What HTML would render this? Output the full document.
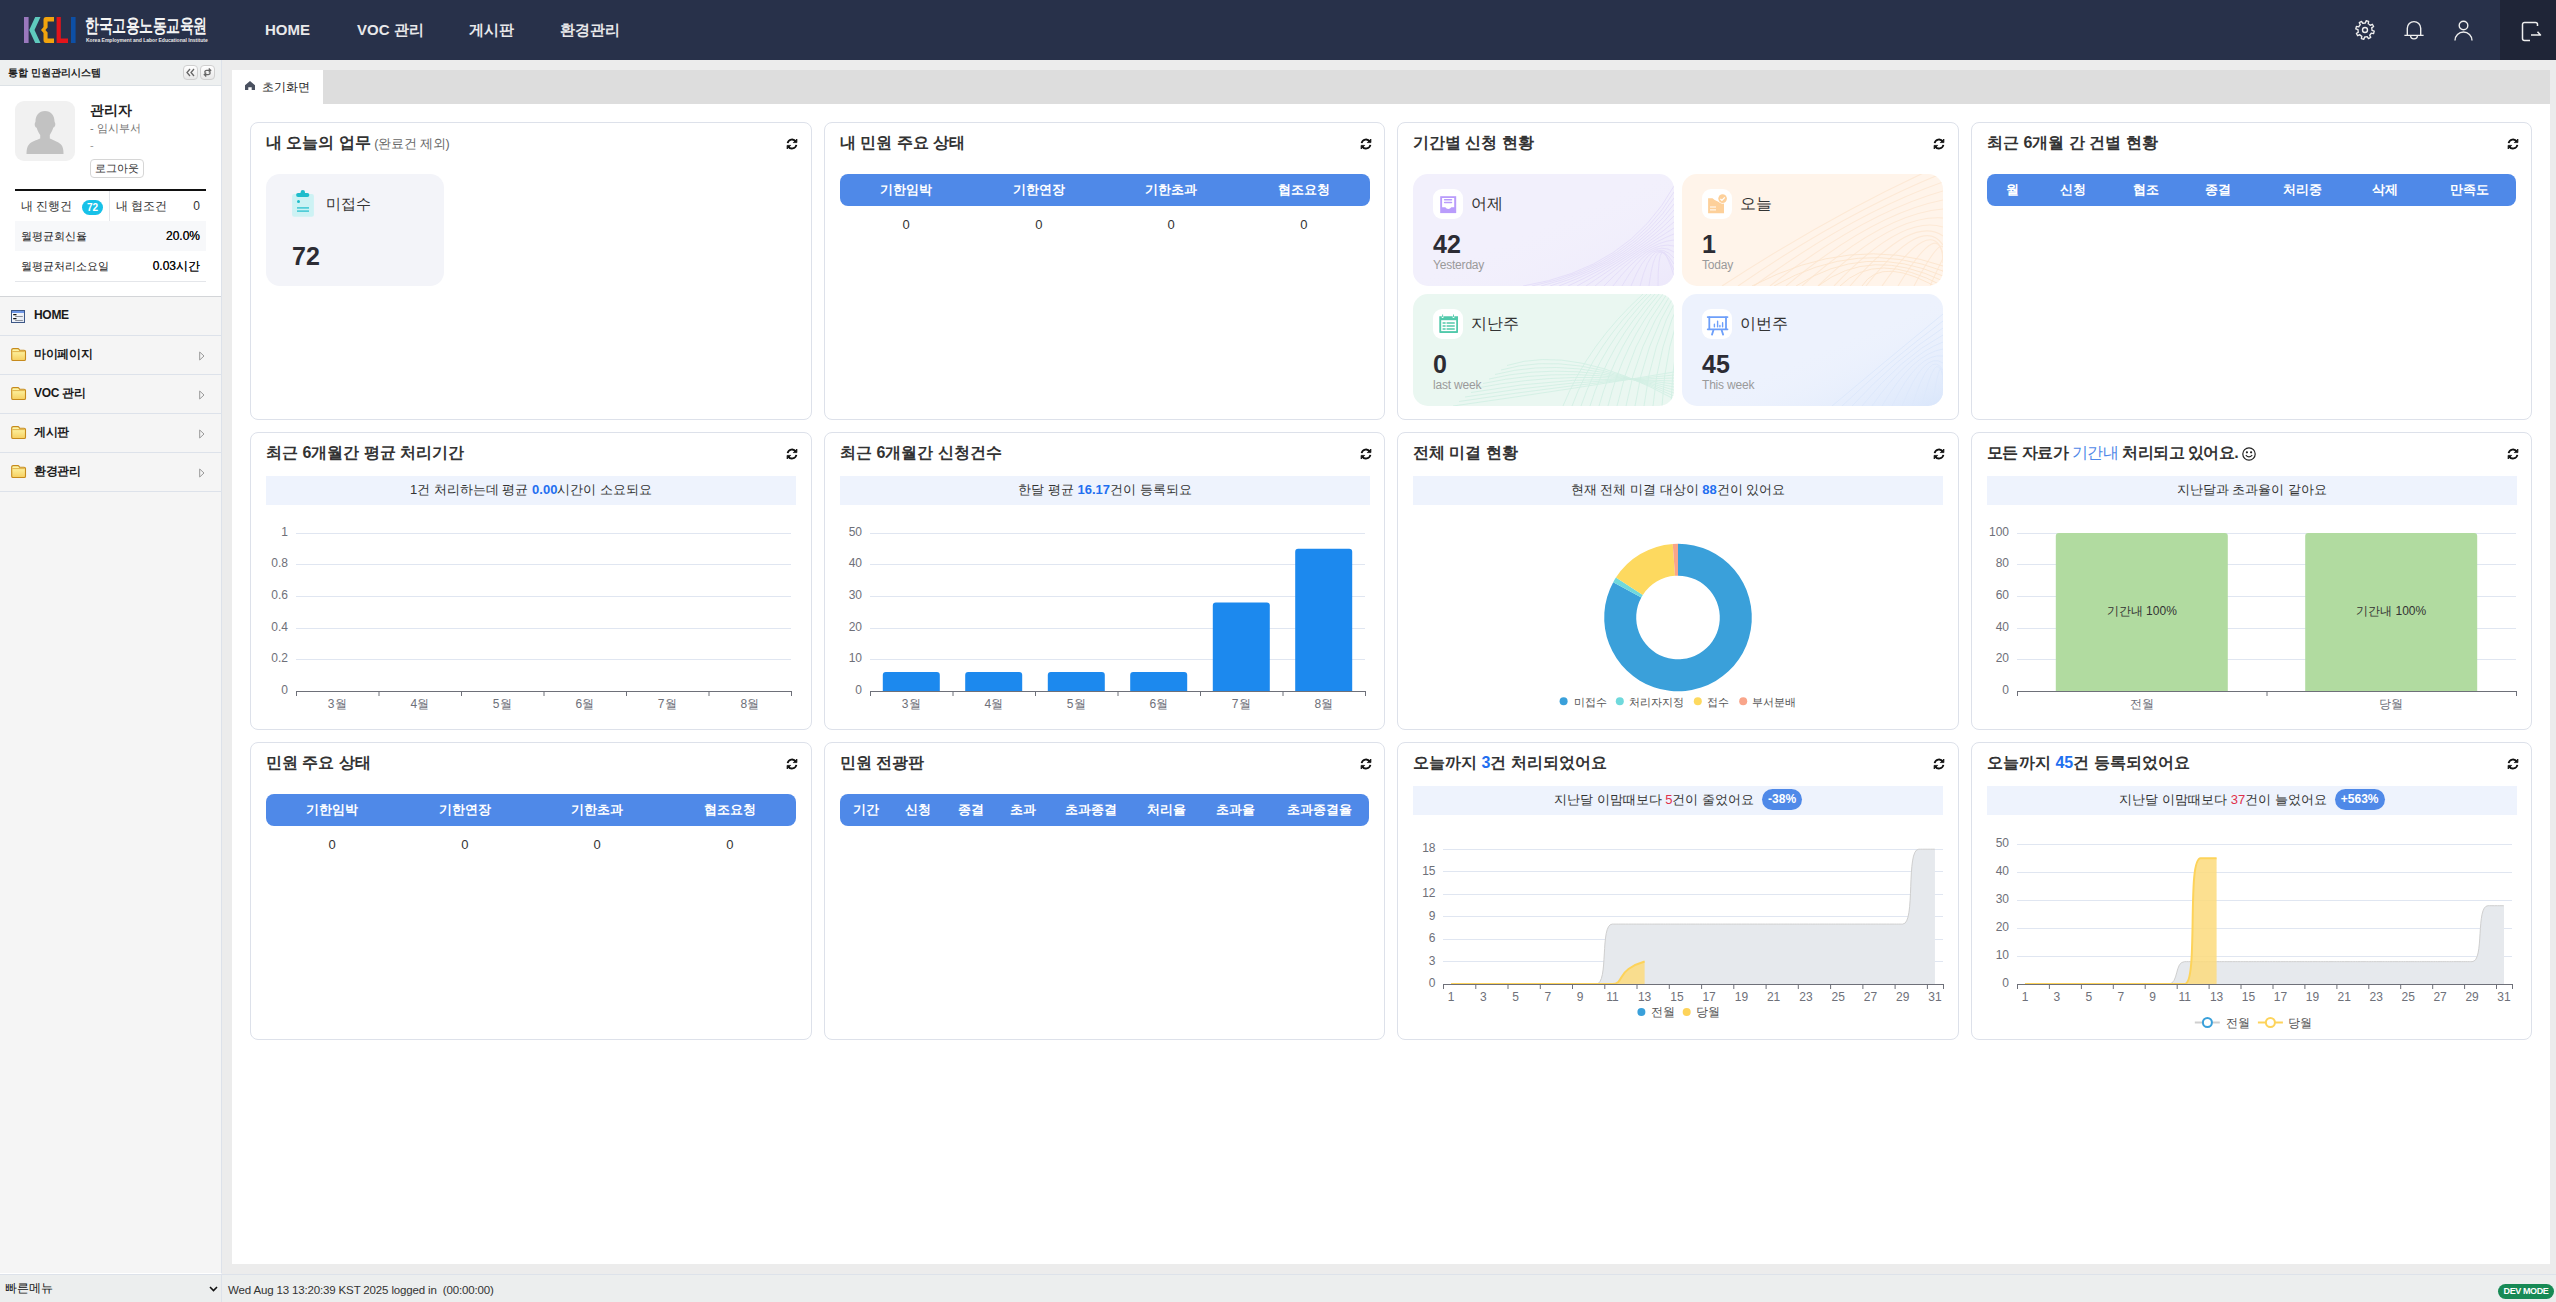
<!DOCTYPE html>
<html lang="ko"><head><meta charset="utf-8">
<style>
*{box-sizing:border-box;margin:0;padding:0}
html,body{width:2556px;height:1302px;overflow:hidden;background:#ececec;font-family:"Liberation Sans",sans-serif;color:#333}
.abs{position:absolute}
#hdr{position:absolute;left:0;top:0;width:2556px;height:60px;background:#28314a}
#logout{position:absolute;left:2500px;top:0;width:56px;height:60px;background:#1f2537}
.nav{position:absolute;top:19px;font-size:15px;font-weight:bold;color:#e8e8ea;white-space:nowrap;line-height:22px}
#side{position:absolute;left:0;top:60px;width:222px;height:1214px;background:#f5f5f5;border-right:1px solid #dde2ea;border-bottom:1px solid #fff}
#side .ttl{position:absolute;left:0;top:0;width:221px;height:26px;background:#eef0f0;border-bottom:1px solid #dde2e6}
#prof{position:absolute;left:0;top:26px;width:221px;height:211px;background:#fff;border-bottom:1px solid #d3d5d8}
.menu{position:absolute;left:0;width:221px;height:39px;border-bottom:1px solid #dde2ea;font-size:12.5px;color:#222}
#main{position:absolute;left:232px;top:70px;width:2318px;height:1194px;background:#fff}
#tabbar{position:absolute;left:323px;top:70px;width:2227px;height:34px;background:#dddddd}
#foot{position:absolute;left:0;top:1274px;width:2556px;height:28px;background:#eceeee;border-top:1px solid #dde2ea}
.card{position:absolute;border:1px solid #dde1ea;border-radius:8px;background:#fff;height:298px}
.ct{position:absolute;left:15px;top:10px;font-size:16px;font-weight:bold;color:#333;white-space:nowrap;line-height:20px}
.rf{position:absolute;top:15px;width:12px;height:12px}
.bar{position:absolute;left:15px;top:51px;height:32px;background:#4f89e8;border-radius:8px;color:#fff;font-weight:bold;font-size:13px}
.bar span,.vals span{position:absolute;top:8px;transform:translateX(-50%);white-space:nowrap;line-height:16px}
.vals{position:absolute;left:15px;top:93px;height:20px;font-size:13px;color:#333}
.vals span{top:1px}
.ban{position:absolute;left:15px;top:53px;height:29px;background:#eef3fd;font-size:13px;color:#333;text-align:center;line-height:28px;white-space:nowrap}
.ban b{color:#1f6ff0;font-weight:bold}
.ban i{color:#e0314b;font-style:normal}
.badge{display:inline-block;background:#4f89e8;color:#fff;font-weight:bold;border-radius:11px;padding:0 6px;line-height:21px;height:21px;font-size:12px;margin-left:8px;vertical-align:1px}
svg{position:absolute;overflow:visible}
.ax{font-size:12px;fill:#6e7079}
</style></head><body>

<!-- HEADER -->
<div id="hdr"></div>
<div id="logout"></div>
<svg style="left:24px;top:17px" width="52" height="27" viewBox="0 0 52 27">
  <rect x="0" y="0" width="4.6" height="26" fill="#9a78bd"/>
  <path d="M16.5 0 L11.2 0 L5.2 13 L11.2 26 L16.5 26 L10.5 13 Z" fill="#5fc9bd"/>
  <path d="M30 0 L22 0 Q19.5 0 19.5 3 L19.5 10 L17 13 L19.5 16 L19.5 23 Q19.5 26 22 26 L30 26 L30 21.5 L23.6 21.5 L23.6 15.5 L21.4 13 L23.6 10.5 L23.6 4.5 L30 4.5 Z" fill="#f1a30d"/>
  <path d="M32.6 0 L36.8 0 L36.8 21.6 L44 21.6 L44 26 L32.6 26 Z" fill="#e3141b"/>
  <rect x="47" y="0" width="4.6" height="26" fill="#0d4fa5"/>
</svg>
<div class="abs" style="left:85px;top:14px;font-size:19px;font-weight:bold;color:#f4f4f4;white-space:nowrap;line-height:24px;letter-spacing:-0.5px;transform:scaleX(0.731);transform-origin:0 0">한국고용노동교육원</div>
<div class="abs" style="left:86px;top:37px;font-size:5px;font-weight:bold;color:#e8e8e8;white-space:nowrap;line-height:6px">Korea Employment and Labor Educational Institute</div>
<div class="nav" style="left:265px">HOME</div>
<div class="nav" style="left:357px">VOC 관리</div>
<div class="nav" style="left:469px">게시판</div>
<div class="nav" style="left:560px">환경관리</div>
<svg style="left:2355px;top:20px" width="20" height="20" viewBox="0 0 20 20" fill="none" stroke="#eeeeee" stroke-width="1.35" stroke-linejoin="round"><path d="M10.37 3.01 L11.13 0.77 L13.63 1.44 L13.18 3.76 A7.0 7.0 0 0 1 15.20 5.32 L17.33 4.27 L18.62 6.52 L16.66 7.84 A7.0 7.0 0 0 1 16.99 10.37 L19.23 11.13 L18.56 13.63 L16.24 13.18 A7.0 7.0 0 0 1 14.68 15.20 L15.73 17.33 L13.48 18.62 L12.16 16.66 A7.0 7.0 0 0 1 9.63 16.99 L8.87 19.23 L6.37 18.56 L6.82 16.24 A7.0 7.0 0 0 1 4.80 14.68 L2.67 15.73 L1.38 13.48 L3.34 12.16 A7.0 7.0 0 0 1 3.01 9.63 L0.77 8.87 L1.44 6.37 L3.76 6.82 A7.0 7.0 0 0 1 5.32 4.80 L4.27 2.67 L6.52 1.38 L7.84 3.34 A7.0 7.0 0 0 1 10.37 3.01Z"/><circle cx="10" cy="10" r="2.5"/></svg>
<svg style="left:2404px;top:20px" width="20" height="21" viewBox="0 0 20 21" fill="none" stroke="#eeeeee" stroke-width="1.4"><path d="M.4 15.4h19.2M3.3 15.4V8.3a6.7 6.7 0 0 1 13.4 0v7.1"/><path d="M6.6 15.5a3.4 3.4 0 0 0 6.8 0"/></svg>
<svg style="left:2454px;top:20px" width="19" height="21" viewBox="0 0 19 21" fill="none" stroke="#eeeeee" stroke-width="1.4">
  <circle cx="9.5" cy="5.5" r="4.3"/>
  <path d="M1 20.5a8.5 8.5 0 0 1 17 0"/>
</svg>
<svg style="left:2521px;top:21px" width="21" height="21" viewBox="0 0 21 21" fill="none" stroke="#eeeeee" stroke-width="1.5" stroke-linejoin="round">
  <path d="M9 19.5H3.5a2 2 0 0 1-2-2V3.5a2 2 0 0 1 2-2h11a2 2 0 0 1 2 2v1.5"/>
  <path d="M10 14h9.5l-3-3.2"/>
</svg>

<!-- SIDEBAR -->
<div id="side">
  <div class="ttl"></div>
  <div class="abs" style="left:8px;top:6px;font-size:10px;font-weight:bold;color:#222;white-space:nowrap;line-height:14px">통합 민원관리시스템</div>
  <div class="abs" style="left:183px;top:5px;width:15px;height:15px;border:1px solid #cfcfcf;border-radius:4px;background:linear-gradient(#fff,#e8e8e8)"></div>
  <svg style="left:185px;top:7px" width="11" height="11" viewBox="0 0 11 11" fill="none" stroke="#666" stroke-width="1.3"><path d="M5 2L2 5.5L5 9M9 2L6 5.5L9 9"/></svg>
  <div class="abs" style="left:200px;top:5px;width:15px;height:15px;border:1px solid #cfcfcf;border-radius:4px;background:linear-gradient(#fff,#e8e8e8)"></div>
  <svg style="left:202px;top:7px" width="11" height="11" viewBox="0 0 11 11" fill="none" stroke="#666" stroke-width="1.3"><path d="M2.8 5.8V5.2Q2.8 3.4 4.6 3.4H7.6"/><path d="M7 1.2l2.3 2.2L7 5.6z" fill="#666" stroke-width=".6"/><path d="M8.2 5.2v.6Q8.2 7.6 6.4 7.6H3.4"/><path d="M4 5.4L1.7 7.6 4 9.8z" fill="#666" stroke-width=".6"/></svg>
  <div id="prof">
    <div class="abs" style="left:15px;top:15px;width:60px;height:60px;background:#f1f1f1;border-radius:9px"></div>
    <svg style="left:25px;top:24px" width="40" height="44" viewBox="0 0 40 44"><path fill="#c2c2c2" d="M20 1c-6 0-9.5 4.5-9.5 10.5 0 1-.8 1-.8 3 0 2 1 3 2 3.3.8 3 2.5 6 3.5 7.3v3.5C12 30 6 32 4 34.5 2 36.5 1.5 40 1.5 44h37c0-4-.5-7.5-2.5-9.5-2-2.5-8-4.5-11.2-6.1v-3.5c1-1.3 2.7-4.3 3.5-7.3 1-.3 2-1.3 2-3.3 0-2-.8-2-.8-3C29.5 5.5 26 1 20 1z"/></svg>
    <div class="abs" style="left:90px;top:15px;font-size:14px;font-weight:bold;color:#222;white-space:nowrap;line-height:18px">관리자</div>
    <div class="abs" style="left:90px;top:35px;font-size:11px;color:#777;white-space:nowrap;line-height:14px">- 임시부서</div>
    <div class="abs" style="left:90px;top:52px;font-size:11px;color:#999;white-space:nowrap;line-height:14px">-</div>
    <div class="abs" style="left:90px;top:73px;width:54px;height:19px;border:1px solid #d6d6d6;border-radius:4px;font-size:11px;color:#333;text-align:center;line-height:17px;background:#fff">로그아웃</div>
    <div class="abs" style="left:15px;top:103px;width:191px;height:2px;background:#111"></div>
    <div class="abs" style="left:15px;top:105px;width:191px;height:30px;background:#fff"></div>
    <div class="abs" style="left:109px;top:105px;width:1px;height:30px;background:#e4e6ea"></div>
    <div class="abs" style="left:21px;top:113px;font-size:11.5px;color:#333;white-space:nowrap;line-height:15px">내 진행건</div>
    <div class="abs" style="left:82px;top:114px;width:21px;height:15px;border-radius:8px;background:#17c1e8;color:#fff;font-size:10px;font-weight:bold;text-align:center;line-height:15px">72</div>
    <div class="abs" style="left:116px;top:113px;font-size:11.5px;color:#333;white-space:nowrap;line-height:15px">내 협조건</div>
    <div class="abs" style="left:190px;top:113px;width:10px;font-size:12px;color:#333;text-align:right;line-height:15px">0</div>
    <div class="abs" style="left:15px;top:135px;width:191px;height:30px;background:#f7f8fa"></div>
    <div class="abs" style="left:21px;top:143px;font-size:11px;color:#222;white-space:nowrap;line-height:15px">월평균회신율</div>
    <div class="abs" style="left:120px;top:143px;width:80px;font-size:12px;color:#111;text-align:right;line-height:15px;text-shadow:0 0 .4px #111">20.0%</div>
    <div class="abs" style="left:21px;top:173px;font-size:11px;color:#222;white-space:nowrap;line-height:15px">월평균처리소요일</div>
    <div class="abs" style="left:120px;top:173px;width:80px;font-size:12px;color:#111;text-align:right;line-height:15px;text-shadow:0 0 .4px #111">0.03시간</div>
    <div class="abs" style="left:15px;top:195px;width:191px;height:1px;background:#e4e6ea"></div>
  </div>
  <div class="menu" style="top:237px">
    <svg style="left:11px;top:13px" width="14" height="13" viewBox="0 0 14 13"><defs><linearGradient id="hg" x1="0" y1="0" x2="1" y2="1"><stop offset="0" stop-color="#fff"/><stop offset="1" stop-color="#dfe6f2"/></linearGradient></defs><rect x=".5" y=".5" width="13" height="12" fill="url(#hg)" stroke="#3d5786"/><rect x="1" y="1" width="12" height="2" fill="#6f97e6"/><path d="M2.2 4.6h3.3M2.2 8.6h3.3" stroke="#111" stroke-width="1.1"/><path d="M4.2 6.5h7.6M4.2 10.5h7.6" stroke="#8a8f99" stroke-width="1"/></svg>
    <div class="abs" style="left:34px;top:10px;font-size:12px;font-weight:bold;color:#1a1a1a;line-height:16px;letter-spacing:-0.3px">HOME</div>
  </div>
  <div class="menu" style="top:276px">
    <svg style="left:11px;top:12px" width="15" height="13" viewBox="0 0 15 13"><defs><linearGradient id="fg" x1="0" y1="0" x2="0" y2="1"><stop offset="0" stop-color="#fffbb0"/><stop offset="1" stop-color="#f6cf60"/></linearGradient></defs><path d="M.7 2.2Q.7 .6 2.2 .6h4.6q1 0 1.4 1l.3.6h4.6q1.4 0 1.4 1.4v7.6q0 1.3-1.3 1.3H2q-1.3 0-1.3-1.3z" fill="url(#fg)" stroke="#c68a1c" stroke-width="1.1"/><path d="M1.4 3.6h12.4" stroke="#d9a233" stroke-width=".8"/></svg>
    <div class="abs" style="left:34px;top:10px;font-size:12px;font-weight:bold;color:#1a1a1a;line-height:16px;letter-spacing:-0.3px">마이페이지</div>
    <svg style="left:199px;top:15px" width="6" height="10" viewBox="0 0 6 10"><path d="M.7 1L5 5L.7 9z" fill="none" stroke="#999" stroke-width="1"/></svg>
  </div>
  <div class="menu" style="top:315px">
    <svg style="left:11px;top:12px" width="15" height="13" viewBox="0 0 15 13"><defs><linearGradient id="fg" x1="0" y1="0" x2="0" y2="1"><stop offset="0" stop-color="#fffbb0"/><stop offset="1" stop-color="#f6cf60"/></linearGradient></defs><path d="M.7 2.2Q.7 .6 2.2 .6h4.6q1 0 1.4 1l.3.6h4.6q1.4 0 1.4 1.4v7.6q0 1.3-1.3 1.3H2q-1.3 0-1.3-1.3z" fill="url(#fg)" stroke="#c68a1c" stroke-width="1.1"/><path d="M1.4 3.6h12.4" stroke="#d9a233" stroke-width=".8"/></svg>
    <div class="abs" style="left:34px;top:10px;font-size:12px;font-weight:bold;color:#1a1a1a;line-height:16px;letter-spacing:-0.3px">VOC 관리</div>
    <svg style="left:199px;top:15px" width="6" height="10" viewBox="0 0 6 10"><path d="M.7 1L5 5L.7 9z" fill="none" stroke="#999" stroke-width="1"/></svg>
  </div>
  <div class="menu" style="top:354px">
    <svg style="left:11px;top:12px" width="15" height="13" viewBox="0 0 15 13"><defs><linearGradient id="fg" x1="0" y1="0" x2="0" y2="1"><stop offset="0" stop-color="#fffbb0"/><stop offset="1" stop-color="#f6cf60"/></linearGradient></defs><path d="M.7 2.2Q.7 .6 2.2 .6h4.6q1 0 1.4 1l.3.6h4.6q1.4 0 1.4 1.4v7.6q0 1.3-1.3 1.3H2q-1.3 0-1.3-1.3z" fill="url(#fg)" stroke="#c68a1c" stroke-width="1.1"/><path d="M1.4 3.6h12.4" stroke="#d9a233" stroke-width=".8"/></svg>
    <div class="abs" style="left:34px;top:10px;font-size:12px;font-weight:bold;color:#1a1a1a;line-height:16px;letter-spacing:-0.3px">게시판</div>
    <svg style="left:199px;top:15px" width="6" height="10" viewBox="0 0 6 10"><path d="M.7 1L5 5L.7 9z" fill="none" stroke="#999" stroke-width="1"/></svg>
  </div>
  <div class="menu" style="top:393px">
    <svg style="left:11px;top:12px" width="15" height="13" viewBox="0 0 15 13"><defs><linearGradient id="fg" x1="0" y1="0" x2="0" y2="1"><stop offset="0" stop-color="#fffbb0"/><stop offset="1" stop-color="#f6cf60"/></linearGradient></defs><path d="M.7 2.2Q.7 .6 2.2 .6h4.6q1 0 1.4 1l.3.6h4.6q1.4 0 1.4 1.4v7.6q0 1.3-1.3 1.3H2q-1.3 0-1.3-1.3z" fill="url(#fg)" stroke="#c68a1c" stroke-width="1.1"/><path d="M1.4 3.6h12.4" stroke="#d9a233" stroke-width=".8"/></svg>
    <div class="abs" style="left:34px;top:10px;font-size:12px;font-weight:bold;color:#1a1a1a;line-height:16px;letter-spacing:-0.3px">환경관리</div>
    <svg style="left:199px;top:15px" width="6" height="10" viewBox="0 0 6 10"><path d="M.7 1L5 5L.7 9z" fill="none" stroke="#999" stroke-width="1"/></svg>
  </div>
</div>

<!-- MAIN -->
<div id="main"></div>
<div id="tabbar"></div>
<svg style="left:245px;top:81px" width="10" height="9" viewBox="0 0 10 9"><path d="M5 0L0 4.3V9h3.3V6.2h3.4V9H10V4.3z" fill="#4a5160"/></svg>
<div class="abs" style="left:262px;top:78.5px;font-size:11.5px;color:#222;white-space:nowrap;line-height:16px">초기화면</div>
<!--CARDS-->
<div class="card" style="left:250px;top:122px;width:562px"><div class="ct">내 오늘의 업무 <span style="font-size:12.5px;font-weight:normal;color:#666;margin-left:-1px;letter-spacing:-0.2px">(완료건 제외)</span></div><div class="abs" style="left:15px;top:51px;width:178px;height:112px;background:#f3f4f9;border-radius:14px"></div><svg style="left:41px;top:67px" width="23" height="27" viewBox="0 0 23 27"><rect x="0.1" y="3.9" width="21.8" height="22.9" rx="2" fill="#cdf2f4"/><circle cx="10.8" cy="2.3" r="2.2" fill="#1fbccb"/><rect x="4.1" y="3.1" width="13.2" height="3.9" rx="1.9" fill="#1fbccb"/><circle cx="6.5" cy="11.5" r="1.5" fill="#1fbccb"/><path d="M5 17.9h12M5 21.1h12" stroke="#52cdd8" stroke-width="1.8"/></svg><div class="abs" style="left:75px;top:71px;font-size:15px;color:#333;white-space:nowrap;line-height:20px">미접수</div><div class="abs" style="left:41px;top:118px;font-size:25px;font-weight:bold;color:#2c2c34;line-height:30px">72</div><svg class="rf" style="left:535px" width="12" height="12" viewBox="0 0 12 12" fill="none" stroke="#111" stroke-width="1.8"><path d="M1.6 5.2A4.5 4.5 0 0 1 9.8 3.6"/><path d="M10.4 6.8A4.5 4.5 0 0 1 2.2 8.4"/><path d="M10.9 1v3.6H7.3z" fill="#111" stroke-width=".8"/><path d="M1.1 11V7.4h3.6z" fill="#111" stroke-width=".8"/></svg></div>
<div class="card" style="left:824px;top:122px;width:561px"><div class="ct">내 민원 주요 상태</div><div class="bar" style="width:530px"><span style="left:66.2px">기한임박</span><span style="left:198.8px">기한연장</span><span style="left:331.2px">기한초과</span><span style="left:463.8px">협조요청</span></div><div class="vals" style="width:530px"><span style="left:66.2px">0</span><span style="left:198.8px">0</span><span style="left:331.2px">0</span><span style="left:463.8px">0</span></div><svg class="rf" style="left:535px" width="12" height="12" viewBox="0 0 12 12" fill="none" stroke="#111" stroke-width="1.8"><path d="M1.6 5.2A4.5 4.5 0 0 1 9.8 3.6"/><path d="M10.4 6.8A4.5 4.5 0 0 1 2.2 8.4"/><path d="M10.9 1v3.6H7.3z" fill="#111" stroke-width=".8"/><path d="M1.1 11V7.4h3.6z" fill="#111" stroke-width=".8"/></svg></div>
<div class="card" style="left:1397px;top:122px;width:562px"><div class="ct">기간별 신청 현황</div><div class="abs" style="left:15px;top:51px;width:261px;height:112px;background:#f2f0fc;border-radius:15px;overflow:hidden"><svg style="left:0;top:0" width="261" height="112"><defs><linearGradient id="gp" x1="0" y1="0" x2="1" y2="1"><stop offset="0.45" stop-color="#f2f0fc" stop-opacity="0"/><stop offset="1" stop-color="#e9e3fa"/></linearGradient></defs><rect width="261" height="112" fill="url(#gp)" opacity=".6"/><path d="M110 112 Q215 95 261 12" fill="none" stroke="#e3dcf8" stroke-width="0.9"/><path d="M119 112 Q217 92 261 18" fill="none" stroke="#e3dcf8" stroke-width="0.9"/><path d="M128 112 Q219 89 261 24" fill="none" stroke="#e3dcf8" stroke-width="0.9"/><path d="M137 112 Q221 86 261 30" fill="none" stroke="#e3dcf8" stroke-width="0.9"/><path d="M146 112 Q223 83 261 36" fill="none" stroke="#e3dcf8" stroke-width="0.9"/><path d="M155 112 Q225 80 261 42" fill="none" stroke="#e3dcf8" stroke-width="0.9"/><path d="M164 112 Q227 77 261 48" fill="none" stroke="#e3dcf8" stroke-width="0.9"/><path d="M173 112 Q229 74 261 54" fill="none" stroke="#e3dcf8" stroke-width="0.9"/><path d="M182 112 Q231 71 261 60" fill="none" stroke="#e3dcf8" stroke-width="0.9"/><path d="M191 112 Q233 68 261 66" fill="none" stroke="#e3dcf8" stroke-width="0.9"/><path d="M200 112 Q235 65 261 72" fill="none" stroke="#e3dcf8" stroke-width="0.9"/><path d="M209 112 Q237 62 261 78" fill="none" stroke="#e3dcf8" stroke-width="0.9"/><path d="M218 112 Q239 59 261 84" fill="none" stroke="#e3dcf8" stroke-width="0.9"/><path d="M227 112 Q241 56 261 90" fill="none" stroke="#e3dcf8" stroke-width="0.9"/><path d="M236 112 Q243 53 261 96" fill="none" stroke="#e3dcf8" stroke-width="0.9"/><path d="M245 112 Q245 50 261 102" fill="none" stroke="#e3dcf8" stroke-width="0.9"/></svg></div><div class="abs" style="left:35px;top:66px;width:30px;height:30px;background:#fff;border-radius:9px"></div><svg style="left:35px;top:66px" width="30" height="30" viewBox="0 0 30 30"><path fill="#b99cfb" d="M7.2 7.2h16v16.9h-16z"/><path fill="#fff" d="M9.1 9.1h12.1v9.1h-2.9q-1 1.8-3 1.8t-3-1.8H9.1z"/><path d="M11.6 10.7h6.9M11.6 13.6h6.9" stroke="#b99cfb" stroke-width="1.5" stroke-linecap="round"/></svg><div class="abs" style="left:73px;top:71px;font-size:16px;color:#333;white-space:nowrap;line-height:20px">어제</div><div class="abs" style="left:35px;top:105.5px;font-size:25px;font-weight:bold;color:#2c2c34;line-height:30px">42</div><div class="abs" style="left:35px;top:135px;font-size:12px;color:#9a9a9a;white-space:nowrap;line-height:15px;letter-spacing:-0.2px">Yesterday</div><div class="abs" style="left:284px;top:51px;width:261px;height:112px;background:#fff4ea;border-radius:15px;overflow:hidden"><svg style="left:0;top:0" width="261" height="112"><path d="M40 112 Q150 40 261 -10" fill="none" stroke="#fde9d6" stroke-width="1.1"/><path d="M56 112 Q160 40 261 -1" fill="none" stroke="#fde9d6" stroke-width="1.1"/><path d="M72 112 Q170 40 261 8" fill="none" stroke="#fde9d6" stroke-width="1.1"/><path d="M88 112 Q180 40 261 17" fill="none" stroke="#fde9d6" stroke-width="1.1"/><path d="M104 112 Q190 40 261 26" fill="none" stroke="#fde9d6" stroke-width="1.1"/><path d="M120 112 Q200 40 261 35" fill="none" stroke="#fde9d6" stroke-width="1.1"/><path d="M136 112 Q210 40 261 44" fill="none" stroke="#fde9d6" stroke-width="1.1"/><path d="M152 112 Q220 40 261 53" fill="none" stroke="#fde9d6" stroke-width="1.1"/><path d="M168 112 Q230 40 261 62" fill="none" stroke="#fde9d6" stroke-width="1.1"/><path d="M184 112 Q240 40 261 71" fill="none" stroke="#fde9d6" stroke-width="1.1"/><path d="M200 112 Q250 40 261 80" fill="none" stroke="#fde9d6" stroke-width="1.1"/><path d="M216 112 Q260 40 261 89" fill="none" stroke="#fde9d6" stroke-width="1.1"/><path d="M232 112 Q270 40 261 98" fill="none" stroke="#fde9d6" stroke-width="1.1"/><path d="M248 112 Q280 40 261 107" fill="none" stroke="#fde9d6" stroke-width="1.1"/><path d="M70 112 Q170 60 261 92" fill="none" stroke="#fce4cc" stroke-width="0.9"/><path d="M92 112 Q176 64 261 97" fill="none" stroke="#fce4cc" stroke-width="0.9"/><path d="M114 112 Q182 68 261 102" fill="none" stroke="#fce4cc" stroke-width="0.9"/><path d="M136 112 Q188 72 261 107" fill="none" stroke="#fce4cc" stroke-width="0.9"/><path d="M158 112 Q194 76 261 112" fill="none" stroke="#fce4cc" stroke-width="0.9"/><path d="M180 112 Q200 80 261 117" fill="none" stroke="#fce4cc" stroke-width="0.9"/></svg></div><div class="abs" style="left:304px;top:66px;width:30px;height:30px;background:#fff;border-radius:9px"></div><svg style="left:304px;top:66px" width="30" height="30" viewBox="0 0 30 30"><path fill="#fdd09a" d="M6.1 9.2h4.4l2.2 1.8q3 1.2 4.5 2.3 1.3 1.2 3 1.2H22v9.8H6.1z"/><path d="M8 18h6M8 20.9h6" stroke="#fff" stroke-width="1"/><circle cx="20.6" cy="9.6" r="4.9" fill="#fff"/><circle cx="20.6" cy="9.6" r="4.3" fill="#fdd09a"/><path d="M18.4 9.9l1.5 1.5 2.9-3" stroke="#fff" stroke-width="1.3" fill="none"/></svg><div class="abs" style="left:342px;top:71px;font-size:16px;color:#333;white-space:nowrap;line-height:20px">오늘</div><div class="abs" style="left:304px;top:105.5px;font-size:25px;font-weight:bold;color:#2c2c34;line-height:30px">1</div><div class="abs" style="left:304px;top:135px;font-size:12px;color:#9a9a9a;white-space:nowrap;line-height:15px;letter-spacing:-0.2px">Today</div><div class="abs" style="left:15px;top:171px;width:261px;height:112px;background:#eaf7f1;border-radius:15px;overflow:hidden"><svg style="left:0;top:0" width="261" height="112"><path d="M150 112 Q175 50 230 0" fill="none" stroke="#d3efe4" stroke-width="0.9"/><path d="M159 112 Q182 50 234 0" fill="none" stroke="#d3efe4" stroke-width="0.9"/><path d="M168 112 Q189 50 238 0" fill="none" stroke="#d3efe4" stroke-width="0.9"/><path d="M177 112 Q196 50 242 0" fill="none" stroke="#d3efe4" stroke-width="0.9"/><path d="M186 112 Q203 50 246 0" fill="none" stroke="#d3efe4" stroke-width="0.9"/><path d="M195 112 Q210 50 250 0" fill="none" stroke="#d3efe4" stroke-width="0.9"/><path d="M204 112 Q217 50 254 0" fill="none" stroke="#d3efe4" stroke-width="0.9"/><path d="M213 112 Q224 50 258 0" fill="none" stroke="#d3efe4" stroke-width="0.9"/><path d="M222 112 Q231 50 262 0" fill="none" stroke="#d3efe4" stroke-width="0.9"/><path d="M231 112 Q238 50 266 0" fill="none" stroke="#d3efe4" stroke-width="0.9"/><path d="M240 112 Q245 50 270 0" fill="none" stroke="#d3efe4" stroke-width="0.9"/><path d="M249 112 Q252 50 274 0" fill="none" stroke="#d3efe4" stroke-width="0.9"/><path d="M258 112 Q259 50 278 0" fill="none" stroke="#d3efe4" stroke-width="0.9"/><path d="M267 112 Q266 50 282 0" fill="none" stroke="#d3efe4" stroke-width="0.9"/><path d="M40 112.0 Q160 95 261 78" fill="none" stroke="#d3efe4" stroke-width="0.9"/><path d="M46 107.5 Q160 90 261 81" fill="none" stroke="#d3efe4" stroke-width="0.9"/><path d="M52 103.0 Q160 85 261 84" fill="none" stroke="#d3efe4" stroke-width="0.9"/><path d="M58 98.5 Q160 80 261 87" fill="none" stroke="#d3efe4" stroke-width="0.9"/><path d="M64 94.0 Q160 75 261 90" fill="none" stroke="#d3efe4" stroke-width="0.9"/><path d="M70 89.5 Q160 70 261 93" fill="none" stroke="#d3efe4" stroke-width="0.9"/><path d="M76 85.0 Q160 65 261 96" fill="none" stroke="#d3efe4" stroke-width="0.9"/><path d="M82 80.5 Q160 60 261 99" fill="none" stroke="#d3efe4" stroke-width="0.9"/><path d="M88 76.0 Q160 55 261 102" fill="none" stroke="#d3efe4" stroke-width="0.9"/><path d="M94 71.5 Q160 50 261 105" fill="none" stroke="#d3efe4" stroke-width="0.9"/></svg></div><div class="abs" style="left:35px;top:186px;width:30px;height:30px;background:#fff;border-radius:9px"></div><svg style="left:35px;top:186px" width="30" height="30" viewBox="0 0 30 30"><path fill="#52c9ab" d="M6.3 7.2h18.7v16.1q0 .8-.8.8H7.1q-.8 0-.8-.8z"/><path fill="#fff" d="M8.2 11.2h15v10.9h-15z"/><path d="M9.6 5.5v3.5M20.5 5.5v3.5" stroke="#fff" stroke-width="1.6"/><path d="M9.6 5.5v2.6M20.5 5.5v2.6" stroke="#52c9ab" stroke-width=".9"/><path d="M10.1 14h2M10.1 17h2M10.1 20h2M14.1 14h7.1M14.1 17h7.1M14.1 20h7.1" stroke="#52c9ab" stroke-width="1.5" stroke-linecap="round"/></svg><div class="abs" style="left:73px;top:191px;font-size:16px;color:#333;white-space:nowrap;line-height:20px">지난주</div><div class="abs" style="left:35px;top:225.5px;font-size:25px;font-weight:bold;color:#2c2c34;line-height:30px">0</div><div class="abs" style="left:35px;top:255px;font-size:12px;color:#9a9a9a;white-space:nowrap;line-height:15px;letter-spacing:-0.2px">last week</div><div class="abs" style="left:284px;top:171px;width:261px;height:112px;background:#edf2fd;border-radius:15px;overflow:hidden"><svg style="left:0;top:0" width="261" height="112"><defs><linearGradient id="gb" x1="0" y1="0" x2="1" y2="1"><stop offset="0.5" stop-color="#edf2fd" stop-opacity="0"/><stop offset="1" stop-color="#d9e6fb"/></linearGradient></defs><rect width="261" height="112" fill="url(#gb)"/><path d="M150 112 Q200 70 261 20" fill="none" stroke="#dde8fb" stroke-width="1"/><path d="M160 112 Q206 68 261 27" fill="none" stroke="#dde8fb" stroke-width="1"/><path d="M170 112 Q212 66 261 34" fill="none" stroke="#dde8fb" stroke-width="1"/><path d="M180 112 Q218 64 261 41" fill="none" stroke="#dde8fb" stroke-width="1"/><path d="M190 112 Q224 62 261 48" fill="none" stroke="#dde8fb" stroke-width="1"/><path d="M200 112 Q230 60 261 55" fill="none" stroke="#dde8fb" stroke-width="1"/><path d="M210 112 Q236 58 261 62" fill="none" stroke="#dde8fb" stroke-width="1"/><path d="M220 112 Q242 56 261 69" fill="none" stroke="#dde8fb" stroke-width="1"/><path d="M230 112 Q248 54 261 76" fill="none" stroke="#dde8fb" stroke-width="1"/><path d="M240 112 Q254 52 261 83" fill="none" stroke="#dde8fb" stroke-width="1"/><path d="M250 112 Q260 50 261 90" fill="none" stroke="#dde8fb" stroke-width="1"/><path d="M260 112 Q266 48 261 97" fill="none" stroke="#dde8fb" stroke-width="1"/></svg></div><div class="abs" style="left:304px;top:186px;width:30px;height:30px;background:#fff;border-radius:9px"></div><svg style="left:304px;top:186px" width="30" height="30" viewBox="0 0 30 30"><path d="M5.7 8.1h19.8M5.7 20.3h19.8M7.3 8v12.3M24 8v12.3M11.5 21l-1.5 4.6M19.6 21l1.5 4.6" stroke="#6d9ffa" stroke-width="1.8" stroke-linecap="round"/><path d="M12.4 15.2v2.6M15.6 12.2v5.6M17.9 16.4v1.4M20.6 13.8v4" stroke="#6d9ffa" stroke-width="1.4" stroke-linecap="round"/></svg><div class="abs" style="left:342px;top:191px;font-size:16px;color:#333;white-space:nowrap;line-height:20px">이번주</div><div class="abs" style="left:304px;top:225.5px;font-size:25px;font-weight:bold;color:#2c2c34;line-height:30px">45</div><div class="abs" style="left:304px;top:255px;font-size:12px;color:#9a9a9a;white-space:nowrap;line-height:15px;letter-spacing:-0.2px">This week</div><svg class="rf" style="left:535px" width="12" height="12" viewBox="0 0 12 12" fill="none" stroke="#111" stroke-width="1.8"><path d="M1.6 5.2A4.5 4.5 0 0 1 9.8 3.6"/><path d="M10.4 6.8A4.5 4.5 0 0 1 2.2 8.4"/><path d="M10.9 1v3.6H7.3z" fill="#111" stroke-width=".8"/><path d="M1.1 11V7.4h3.6z" fill="#111" stroke-width=".8"/></svg></div>
<div class="card" style="left:1971px;top:122px;width:561px"><div class="ct">최근 6개월 간 건별 현황</div><div class="bar" style="width:529px"><span style="left:25px">월</span><span style="left:86px">신청</span><span style="left:159px">협조</span><span style="left:231px">종결</span><span style="left:315px">처리중</span><span style="left:398px">삭제</span><span style="left:482px">만족도</span></div><svg class="rf" style="left:535px" width="12" height="12" viewBox="0 0 12 12" fill="none" stroke="#111" stroke-width="1.8"><path d="M1.6 5.2A4.5 4.5 0 0 1 9.8 3.6"/><path d="M10.4 6.8A4.5 4.5 0 0 1 2.2 8.4"/><path d="M10.9 1v3.6H7.3z" fill="#111" stroke-width=".8"/><path d="M1.1 11V7.4h3.6z" fill="#111" stroke-width=".8"/></svg></div>
<div class="card" style="left:250px;top:432px;width:562px"><div class="ct">최근 6개월간 평균 처리기간</div><div class="ban" style="top:43px;width:530px">1건 처리하는데 평균 <b>0.00</b>시간이 소요되요</div><svg class="rf" style="left:535px" width="12" height="12" viewBox="0 0 12 12" fill="none" stroke="#111" stroke-width="1.8"><path d="M1.6 5.2A4.5 4.5 0 0 1 9.8 3.6"/><path d="M10.4 6.8A4.5 4.5 0 0 1 2.2 8.4"/><path d="M10.9 1v3.6H7.3z" fill="#111" stroke-width=".8"/><path d="M1.1 11V7.4h3.6z" fill="#111" stroke-width=".8"/></svg></div>
<div class="card" style="left:824px;top:432px;width:561px"><div class="ct">최근 6개월간 신청건수</div><div class="ban" style="top:43px;width:530px">한달 평균 <b>16.17</b>건이 등록되요</div><svg class="rf" style="left:535px" width="12" height="12" viewBox="0 0 12 12" fill="none" stroke="#111" stroke-width="1.8"><path d="M1.6 5.2A4.5 4.5 0 0 1 9.8 3.6"/><path d="M10.4 6.8A4.5 4.5 0 0 1 2.2 8.4"/><path d="M10.9 1v3.6H7.3z" fill="#111" stroke-width=".8"/><path d="M1.1 11V7.4h3.6z" fill="#111" stroke-width=".8"/></svg></div>
<div class="card" style="left:1397px;top:432px;width:562px"><div class="ct">전체 미결 현황</div><div class="ban" style="top:43px;width:530px">현재 전체 미결 대상이 <b>88</b>건이 있어요</div><svg class="rf" style="left:535px" width="12" height="12" viewBox="0 0 12 12" fill="none" stroke="#111" stroke-width="1.8"><path d="M1.6 5.2A4.5 4.5 0 0 1 9.8 3.6"/><path d="M10.4 6.8A4.5 4.5 0 0 1 2.2 8.4"/><path d="M10.9 1v3.6H7.3z" fill="#111" stroke-width=".8"/><path d="M1.1 11V7.4h3.6z" fill="#111" stroke-width=".8"/></svg></div>
<div class="card" style="left:1971px;top:432px;width:561px"><div class="ct" style="letter-spacing:-0.55px">모든 자료가 <span style="color:#4f89e8;font-weight:normal">기간내</span> 처리되고 있어요.</div><svg style="left:270px;top:13.5px" width="14" height="14" viewBox="0 0 14 14" fill="none" stroke="#222" stroke-width="1.2"><circle cx="7" cy="7" r="6.2"/><circle cx="4.9" cy="5.3" r=".5" fill="#222"/><circle cx="9.1" cy="5.3" r=".5" fill="#222"/><path d="M3.8 8.2q3.2 3.4 6.4 0"/></svg><div class="ban" style="top:43px;width:530px">지난달과 초과율이 같아요</div><svg class="rf" style="left:535px" width="12" height="12" viewBox="0 0 12 12" fill="none" stroke="#111" stroke-width="1.8"><path d="M1.6 5.2A4.5 4.5 0 0 1 9.8 3.6"/><path d="M10.4 6.8A4.5 4.5 0 0 1 2.2 8.4"/><path d="M10.9 1v3.6H7.3z" fill="#111" stroke-width=".8"/><path d="M1.1 11V7.4h3.6z" fill="#111" stroke-width=".8"/></svg></div>
<div class="card" style="left:250px;top:742px;width:562px"><div class="ct">민원 주요 상태</div><div class="bar" style="width:530px"><span style="left:66.2px">기한임박</span><span style="left:198.8px">기한연장</span><span style="left:331.2px">기한초과</span><span style="left:463.8px">협조요청</span></div><div class="vals" style="width:530px"><span style="left:66.2px">0</span><span style="left:198.8px">0</span><span style="left:331.2px">0</span><span style="left:463.8px">0</span></div><svg class="rf" style="left:535px" width="12" height="12" viewBox="0 0 12 12" fill="none" stroke="#111" stroke-width="1.8"><path d="M1.6 5.2A4.5 4.5 0 0 1 9.8 3.6"/><path d="M10.4 6.8A4.5 4.5 0 0 1 2.2 8.4"/><path d="M10.9 1v3.6H7.3z" fill="#111" stroke-width=".8"/><path d="M1.1 11V7.4h3.6z" fill="#111" stroke-width=".8"/></svg></div>
<div class="card" style="left:824px;top:742px;width:561px"><div class="ct">민원 전광판</div><div class="bar" style="width:529px"><span style="left:26px">기간</span><span style="left:78px">신청</span><span style="left:130.5px">종결</span><span style="left:182.7px">초과</span><span style="left:251px">초과종결</span><span style="left:326.7px">처리율</span><span style="left:395px">초과율</span><span style="left:479.7px">초과종결율</span></div><svg class="rf" style="left:535px" width="12" height="12" viewBox="0 0 12 12" fill="none" stroke="#111" stroke-width="1.8"><path d="M1.6 5.2A4.5 4.5 0 0 1 9.8 3.6"/><path d="M10.4 6.8A4.5 4.5 0 0 1 2.2 8.4"/><path d="M10.9 1v3.6H7.3z" fill="#111" stroke-width=".8"/><path d="M1.1 11V7.4h3.6z" fill="#111" stroke-width=".8"/></svg></div>
<div class="card" style="left:1397px;top:742px;width:562px"><div class="ct">오늘까지 <span style="color:#1f6ff0">3</span>건 처리되었어요</div><div class="ban" style="top:43px;width:530px">지난달 이맘때보다 <i>5</i>건이 줄었어요<span class="badge">-38%</span></div><svg class="rf" style="left:535px" width="12" height="12" viewBox="0 0 12 12" fill="none" stroke="#111" stroke-width="1.8"><path d="M1.6 5.2A4.5 4.5 0 0 1 9.8 3.6"/><path d="M10.4 6.8A4.5 4.5 0 0 1 2.2 8.4"/><path d="M10.9 1v3.6H7.3z" fill="#111" stroke-width=".8"/><path d="M1.1 11V7.4h3.6z" fill="#111" stroke-width=".8"/></svg></div>
<div class="card" style="left:1971px;top:742px;width:561px"><div class="ct">오늘까지 <span style="color:#1f6ff0">45</span>건 등록되었어요</div><div class="ban" style="top:43px;width:530px">지난달 이맘때보다 <i>37</i>건이 늘었어요<span class="badge">+563%</span></div><svg class="rf" style="left:535px" width="12" height="12" viewBox="0 0 12 12" fill="none" stroke="#111" stroke-width="1.8"><path d="M1.6 5.2A4.5 4.5 0 0 1 9.8 3.6"/><path d="M10.4 6.8A4.5 4.5 0 0 1 2.2 8.4"/><path d="M10.9 1v3.6H7.3z" fill="#111" stroke-width=".8"/><path d="M1.1 11V7.4h3.6z" fill="#111" stroke-width=".8"/></svg></div>
<svg style="left:0;top:0" width="2556" height="1302" viewBox="0 0 2556 1302"><line x1="296" x2="791" y1="533.5" y2="533.5" stroke="#e0e6f1" stroke-width="1"/><text x="288" y="536.0" text-anchor="end" class="ax">1</text><line x1="296" x2="791" y1="564.5" y2="564.5" stroke="#e0e6f1" stroke-width="1"/><text x="288" y="567.0" text-anchor="end" class="ax">0.8</text><line x1="296" x2="791" y1="596.5" y2="596.5" stroke="#e0e6f1" stroke-width="1"/><text x="288" y="599.0" text-anchor="end" class="ax">0.6</text><line x1="296" x2="791" y1="628.5" y2="628.5" stroke="#e0e6f1" stroke-width="1"/><text x="288" y="631.0" text-anchor="end" class="ax">0.4</text><line x1="296" x2="791" y1="659.5" y2="659.5" stroke="#e0e6f1" stroke-width="1"/><text x="288" y="662.0" text-anchor="end" class="ax">0.2</text><text x="288" y="694.0" text-anchor="end" class="ax">0</text><line x1="296" x2="791" y1="691.5" y2="691.5" stroke="#6e7079" stroke-width="1"/><line x1="296.5" x2="296.5" y1="691" y2="696" stroke="#6e7079" stroke-width="1"/><line x1="379.0" x2="379.0" y1="691" y2="696" stroke="#6e7079" stroke-width="1"/><line x1="461.5" x2="461.5" y1="691" y2="696" stroke="#6e7079" stroke-width="1"/><line x1="544.0" x2="544.0" y1="691" y2="696" stroke="#6e7079" stroke-width="1"/><line x1="626.5" x2="626.5" y1="691" y2="696" stroke="#6e7079" stroke-width="1"/><line x1="709.0" x2="709.0" y1="691" y2="696" stroke="#6e7079" stroke-width="1"/><line x1="791.5" x2="791.5" y1="691" y2="696" stroke="#6e7079" stroke-width="1"/><text x="337.2" y="708" text-anchor="middle" class="ax">3월</text><text x="419.8" y="708" text-anchor="middle" class="ax">4월</text><text x="502.2" y="708" text-anchor="middle" class="ax">5월</text><text x="584.8" y="708" text-anchor="middle" class="ax">6월</text><text x="667.2" y="708" text-anchor="middle" class="ax">7월</text><text x="749.8" y="708" text-anchor="middle" class="ax">8월</text><line x1="870" x2="1365" y1="533.5" y2="533.5" stroke="#e0e6f1" stroke-width="1"/><text x="862" y="536.0" text-anchor="end" class="ax">50</text><line x1="870" x2="1365" y1="564.5" y2="564.5" stroke="#e0e6f1" stroke-width="1"/><text x="862" y="567.0" text-anchor="end" class="ax">40</text><line x1="870" x2="1365" y1="596.5" y2="596.5" stroke="#e0e6f1" stroke-width="1"/><text x="862" y="599.0" text-anchor="end" class="ax">30</text><line x1="870" x2="1365" y1="628.5" y2="628.5" stroke="#e0e6f1" stroke-width="1"/><text x="862" y="631.0" text-anchor="end" class="ax">20</text><line x1="870" x2="1365" y1="659.5" y2="659.5" stroke="#e0e6f1" stroke-width="1"/><text x="862" y="662.0" text-anchor="end" class="ax">10</text><text x="862" y="694.0" text-anchor="end" class="ax">0</text><path d="M882.8 691V675.0q0-3 3-3h51q3 0 3 3V691z" fill="#1c89ee"/><path d="M965.2 691V675.0q0-3 3-3h51q3 0 3 3V691z" fill="#1c89ee"/><path d="M1047.8 691V675.0q0-3 3-3h51q3 0 3 3V691z" fill="#1c89ee"/><path d="M1130.2 691V675.0q0-3 3-3h51q3 0 3 3V691z" fill="#1c89ee"/><path d="M1212.8 691V605.5q0-3 3-3h51q3 0 3 3V691z" fill="#1c89ee"/><path d="M1295.2 691V551.8q0-3 3-3h51q3 0 3 3V691z" fill="#1c89ee"/><line x1="870" x2="1365" y1="691.5" y2="691.5" stroke="#6e7079" stroke-width="1"/><line x1="870.5" x2="870.5" y1="691" y2="696" stroke="#6e7079" stroke-width="1"/><line x1="953.0" x2="953.0" y1="691" y2="696" stroke="#6e7079" stroke-width="1"/><line x1="1035.5" x2="1035.5" y1="691" y2="696" stroke="#6e7079" stroke-width="1"/><line x1="1118.0" x2="1118.0" y1="691" y2="696" stroke="#6e7079" stroke-width="1"/><line x1="1200.5" x2="1200.5" y1="691" y2="696" stroke="#6e7079" stroke-width="1"/><line x1="1283.0" x2="1283.0" y1="691" y2="696" stroke="#6e7079" stroke-width="1"/><line x1="1365.5" x2="1365.5" y1="691" y2="696" stroke="#6e7079" stroke-width="1"/><text x="911.2" y="708" text-anchor="middle" class="ax">3월</text><text x="993.8" y="708" text-anchor="middle" class="ax">4월</text><text x="1076.2" y="708" text-anchor="middle" class="ax">5월</text><text x="1158.8" y="708" text-anchor="middle" class="ax">6월</text><text x="1241.2" y="708" text-anchor="middle" class="ax">7월</text><text x="1323.8" y="708" text-anchor="middle" class="ax">8월</text><line x1="2017" x2="2516" y1="533.5" y2="533.5" stroke="#e0e6f1" stroke-width="1"/><text x="2009" y="536.0" text-anchor="end" class="ax">100</text><line x1="2017" x2="2516" y1="564.5" y2="564.5" stroke="#e0e6f1" stroke-width="1"/><text x="2009" y="567.0" text-anchor="end" class="ax">80</text><line x1="2017" x2="2516" y1="596.5" y2="596.5" stroke="#e0e6f1" stroke-width="1"/><text x="2009" y="599.0" text-anchor="end" class="ax">60</text><line x1="2017" x2="2516" y1="628.5" y2="628.5" stroke="#e0e6f1" stroke-width="1"/><text x="2009" y="631.0" text-anchor="end" class="ax">40</text><line x1="2017" x2="2516" y1="659.5" y2="659.5" stroke="#e0e6f1" stroke-width="1"/><text x="2009" y="662.0" text-anchor="end" class="ax">20</text><text x="2009" y="694.0" text-anchor="end" class="ax">0</text><path d="M2055.8 691V536q0-3 3-3h166q3 0 3 3V691z" fill="#b1dba0"/><text x="2141.8" y="614.5" text-anchor="middle" style="font-size:12px;fill:#333">기간내 100%</text><text x="2141.8" y="708" text-anchor="middle" class="ax">전월</text><path d="M2305.2 691V536q0-3 3-3h166q3 0 3 3V691z" fill="#b1dba0"/><text x="2391.2" y="614.5" text-anchor="middle" style="font-size:12px;fill:#333">기간내 100%</text><text x="2391.2" y="708" text-anchor="middle" class="ax">당월</text><line x1="2017" x2="2516" y1="691.5" y2="691.5" stroke="#6e7079" stroke-width="1"/><line x1="2017.5" x2="2017.5" y1="691" y2="696" stroke="#6e7079" stroke-width="1"/><line x1="2267.0" x2="2267.0" y1="691" y2="696" stroke="#6e7079" stroke-width="1"/><line x1="2516.5" x2="2516.5" y1="691" y2="696" stroke="#6e7079" stroke-width="1"/><path d="M1678.00 543.70A73.8 73.8 0 1 1 1613.23 582.13L1641.31 597.47A41.8 41.8 0 1 0 1678.00 575.70z" fill="#3aa0da"/><path d="M1613.23 582.13A73.8 73.8 0 0 1 1615.92 577.60L1642.84 594.90A41.8 41.8 0 0 0 1641.31 597.47z" fill="#6fd9dc"/><path d="M1615.92 577.60A73.8 73.8 0 0 1 1672.74 543.89L1675.02 575.81A41.8 41.8 0 0 0 1642.84 594.90z" fill="#fdd95f"/><path d="M1672.74 543.89A73.8 73.8 0 0 1 1678.00 543.70L1678.00 575.70A41.8 41.8 0 0 0 1675.02 575.81z" fill="#f9a58a"/><circle cx="1563.6" cy="701.2" r="4" fill="#3aa0da"/><text x="1573.5" y="705.5" style="font-size:11px;fill:#555">미접수</text><circle cx="1619.8" cy="701.2" r="4" fill="#6fd9dc"/><text x="1629.2" y="705.5" style="font-size:11px;fill:#555">처리자지정</text><circle cx="1697.8" cy="701.2" r="4" fill="#fdd95f"/><text x="1707.2" y="705.5" style="font-size:11px;fill:#555">접수</text><circle cx="1743.2" cy="701.2" r="4" fill="#f9a58a"/><text x="1752.1" y="705.5" style="font-size:11px;fill:#555">부서분배</text><line x1="1443" x2="1943" y1="849.5" y2="849.5" stroke="#e0e6f1" stroke-width="1"/><text x="1435.5" y="852.2" text-anchor="end" class="ax">18</text><line x1="1443" x2="1943" y1="871.5" y2="871.5" stroke="#e0e6f1" stroke-width="1"/><text x="1435.5" y="874.7" text-anchor="end" class="ax">15</text><line x1="1443" x2="1943" y1="894.5" y2="894.5" stroke="#e0e6f1" stroke-width="1"/><text x="1435.5" y="897.1" text-anchor="end" class="ax">12</text><line x1="1443" x2="1943" y1="916.5" y2="916.5" stroke="#e0e6f1" stroke-width="1"/><text x="1435.5" y="919.6" text-anchor="end" class="ax">9</text><line x1="1443" x2="1943" y1="939.5" y2="939.5" stroke="#e0e6f1" stroke-width="1"/><text x="1435.5" y="942.1" text-anchor="end" class="ax">6</text><line x1="1443" x2="1943" y1="961.5" y2="961.5" stroke="#e0e6f1" stroke-width="1"/><text x="1435.5" y="964.5" text-anchor="end" class="ax">3</text><text x="1435.5" y="987.0" text-anchor="end" class="ax">0</text><path d="M1451.06 984 C1451.06 984 1459.13 984 1467.19 984 C1475.26 984 1475.26 984 1483.32 984 C1491.39 984 1491.39 984 1499.45 984 C1507.52 984 1507.52 984 1515.58 984 C1523.65 984 1523.65 984 1531.71 984 C1539.77 984 1539.77 984 1547.84 984 C1555.9 984 1555.9 984 1563.97 984 C1572.03 984 1572.03 984 1580.1 984 C1588.16 984 1592.9 984 1596.23 984 C1609.03 984 1599.55 924.09 1612.35 924.09 C1615.68 924.09 1620.42 924.09 1628.48 924.09 C1636.55 924.09 1636.55 924.09 1644.61 924.09 C1652.68 924.09 1652.68 924.09 1660.74 924.09 C1668.81 924.09 1668.81 924.09 1676.87 924.09 C1684.94 924.09 1684.94 924.09 1693 924.09 C1701.06 924.09 1701.06 924.09 1709.13 924.09 C1717.19 924.09 1717.19 924.09 1725.26 924.09 C1733.32 924.09 1733.32 924.09 1741.39 924.09 C1749.45 924.09 1749.45 924.09 1757.52 924.09 C1765.58 924.09 1765.58 924.09 1773.65 924.09 C1781.71 924.09 1781.71 924.09 1789.77 924.09 C1797.84 924.09 1797.84 924.09 1805.9 924.09 C1813.97 924.09 1813.97 924.09 1822.03 924.09 C1830.1 924.09 1830.1 924.09 1838.16 924.09 C1846.23 924.09 1846.23 924.09 1854.29 924.09 C1862.35 924.09 1862.35 924.09 1870.42 924.09 C1878.48 924.09 1878.48 924.09 1886.55 924.09 C1894.61 924.09 1899.87 924.09 1902.68 924.09 C1916 924.09 1905.48 849.2 1918.81 849.2 C1921.61 849.2 1934.94 849.2 1934.94 849.2 L1934.94 984 L1451.06 984z" fill="#e6e9ed"/><path d="M1451.06 984 C1451.06 984 1459.13 984 1467.19 984 C1475.26 984 1475.26 984 1483.32 984 C1491.39 984 1491.39 984 1499.45 984 C1507.52 984 1507.52 984 1515.58 984 C1523.65 984 1523.65 984 1531.71 984 C1539.77 984 1539.77 984 1547.84 984 C1555.9 984 1555.9 984 1563.97 984 C1572.03 984 1572.03 984 1580.1 984 C1588.16 984 1592.9 984 1596.23 984 C1609.03 984 1599.55 924.09 1612.35 924.09 C1615.68 924.09 1620.42 924.09 1628.48 924.09 C1636.55 924.09 1636.55 924.09 1644.61 924.09 C1652.68 924.09 1652.68 924.09 1660.74 924.09 C1668.81 924.09 1668.81 924.09 1676.87 924.09 C1684.94 924.09 1684.94 924.09 1693 924.09 C1701.06 924.09 1701.06 924.09 1709.13 924.09 C1717.19 924.09 1717.19 924.09 1725.26 924.09 C1733.32 924.09 1733.32 924.09 1741.39 924.09 C1749.45 924.09 1749.45 924.09 1757.52 924.09 C1765.58 924.09 1765.58 924.09 1773.65 924.09 C1781.71 924.09 1781.71 924.09 1789.77 924.09 C1797.84 924.09 1797.84 924.09 1805.9 924.09 C1813.97 924.09 1813.97 924.09 1822.03 924.09 C1830.1 924.09 1830.1 924.09 1838.16 924.09 C1846.23 924.09 1846.23 924.09 1854.29 924.09 C1862.35 924.09 1862.35 924.09 1870.42 924.09 C1878.48 924.09 1878.48 924.09 1886.55 924.09 C1894.61 924.09 1899.87 924.09 1902.68 924.09 C1916 924.09 1905.48 849.2 1918.81 849.2 C1921.61 849.2 1934.94 849.2 1934.94 849.2" fill="none" stroke="#cfcfcf" stroke-width="1"/><path d="M1451.06 984 C1451.06 984 1459.13 984 1467.19 984 C1475.26 984 1475.26 984 1483.32 984 C1491.39 984 1491.39 984 1499.45 984 C1507.52 984 1507.52 984 1515.58 984 C1523.65 984 1523.65 984 1531.71 984 C1539.77 984 1539.77 984 1547.84 984 C1555.9 984 1555.9 984 1563.97 984 C1572.03 984 1572.03 984 1580.1 984 C1588.16 984 1588.16 984 1596.23 984 C1604.29 984 1605.53 984 1612.35 984 C1621.66 984 1619.56 975.24 1628.48 969.02 C1635.69 964 1644.61 961.53 1644.61 961.53 L1644.61 984 L1451.06 984z" fill="#fbdb7d" fill-opacity="0.85"/><path d="M1451.06 984 C1451.06 984 1459.13 984 1467.19 984 C1475.26 984 1475.26 984 1483.32 984 C1491.39 984 1491.39 984 1499.45 984 C1507.52 984 1507.52 984 1515.58 984 C1523.65 984 1523.65 984 1531.71 984 C1539.77 984 1539.77 984 1547.84 984 C1555.9 984 1555.9 984 1563.97 984 C1572.03 984 1572.03 984 1580.1 984 C1588.16 984 1588.16 984 1596.23 984 C1604.29 984 1605.53 984 1612.35 984 C1621.66 984 1619.56 975.24 1628.48 969.02 C1635.69 964 1644.61 961.53 1644.61 961.53" fill="none" stroke="#fdd35a" stroke-width="2"/><line x1="1443" x2="1943" y1="984.5" y2="984.5" stroke="#6e7079" stroke-width="1"/><line x1="1443.5" x2="1443.5" y1="984" y2="989" stroke="#6e7079" stroke-width="1"/><line x1="1475.8" x2="1475.8" y1="984" y2="989" stroke="#6e7079" stroke-width="1"/><line x1="1508.0" x2="1508.0" y1="984" y2="989" stroke="#6e7079" stroke-width="1"/><line x1="1540.3" x2="1540.3" y1="984" y2="989" stroke="#6e7079" stroke-width="1"/><line x1="1572.5" x2="1572.5" y1="984" y2="989" stroke="#6e7079" stroke-width="1"/><line x1="1604.8" x2="1604.8" y1="984" y2="989" stroke="#6e7079" stroke-width="1"/><line x1="1637.0" x2="1637.0" y1="984" y2="989" stroke="#6e7079" stroke-width="1"/><line x1="1669.3" x2="1669.3" y1="984" y2="989" stroke="#6e7079" stroke-width="1"/><line x1="1701.6" x2="1701.6" y1="984" y2="989" stroke="#6e7079" stroke-width="1"/><line x1="1733.8" x2="1733.8" y1="984" y2="989" stroke="#6e7079" stroke-width="1"/><line x1="1766.1" x2="1766.1" y1="984" y2="989" stroke="#6e7079" stroke-width="1"/><line x1="1798.3" x2="1798.3" y1="984" y2="989" stroke="#6e7079" stroke-width="1"/><line x1="1830.6" x2="1830.6" y1="984" y2="989" stroke="#6e7079" stroke-width="1"/><line x1="1862.9" x2="1862.9" y1="984" y2="989" stroke="#6e7079" stroke-width="1"/><line x1="1895.1" x2="1895.1" y1="984" y2="989" stroke="#6e7079" stroke-width="1"/><line x1="1927.4" x2="1927.4" y1="984" y2="989" stroke="#6e7079" stroke-width="1"/><line x1="1943.5" x2="1943.5" y1="984" y2="989" stroke="#6e7079" stroke-width="1"/><text x="1451.1" y="1001" text-anchor="middle" class="ax">1</text><text x="1483.3" y="1001" text-anchor="middle" class="ax">3</text><text x="1515.6" y="1001" text-anchor="middle" class="ax">5</text><text x="1547.8" y="1001" text-anchor="middle" class="ax">7</text><text x="1580.1" y="1001" text-anchor="middle" class="ax">9</text><text x="1612.4" y="1001" text-anchor="middle" class="ax">11</text><text x="1644.6" y="1001" text-anchor="middle" class="ax">13</text><text x="1676.9" y="1001" text-anchor="middle" class="ax">15</text><text x="1709.1" y="1001" text-anchor="middle" class="ax">17</text><text x="1741.4" y="1001" text-anchor="middle" class="ax">19</text><text x="1773.6" y="1001" text-anchor="middle" class="ax">21</text><text x="1805.9" y="1001" text-anchor="middle" class="ax">23</text><text x="1838.2" y="1001" text-anchor="middle" class="ax">25</text><text x="1870.4" y="1001" text-anchor="middle" class="ax">27</text><text x="1902.7" y="1001" text-anchor="middle" class="ax">29</text><text x="1934.9" y="1001" text-anchor="middle" class="ax">31</text><circle cx="1641.4" cy="1012" r="4" fill="#3aa0da"/><text x="1651" y="1016.3" style="font-size:12px;fill:#555">전월</text><circle cx="1686.7" cy="1012" r="4" fill="#fdd35a"/><text x="1696" y="1016.3" style="font-size:12px;fill:#555">당월</text><line x1="2017" x2="2512" y1="844.5" y2="844.5" stroke="#e0e6f1" stroke-width="1"/><text x="2009" y="847.2" text-anchor="end" class="ax">50</text><line x1="2017" x2="2512" y1="872.5" y2="872.5" stroke="#e0e6f1" stroke-width="1"/><text x="2009" y="875.2" text-anchor="end" class="ax">40</text><line x1="2017" x2="2512" y1="900.5" y2="900.5" stroke="#e0e6f1" stroke-width="1"/><text x="2009" y="903.1" text-anchor="end" class="ax">30</text><line x1="2017" x2="2512" y1="928.5" y2="928.5" stroke="#e0e6f1" stroke-width="1"/><text x="2009" y="931.1" text-anchor="end" class="ax">20</text><line x1="2017" x2="2512" y1="956.5" y2="956.5" stroke="#e0e6f1" stroke-width="1"/><text x="2009" y="959.0" text-anchor="end" class="ax">10</text><text x="2009" y="987.0" text-anchor="end" class="ax">0</text><path d="M2024.98 984 C2024.98 984 2032.97 984 2040.95 984 C2048.94 984 2048.94 984 2056.92 984 C2064.9 984 2064.9 984 2072.89 984 C2080.87 984 2080.87 984 2088.85 984 C2096.84 984 2096.84 984 2104.82 984 C2112.81 984 2112.81 984 2120.79 984 C2128.77 984 2128.77 984 2136.76 984 C2144.74 984 2144.74 984 2152.73 984 C2160.71 984 2162.83 984 2168.69 984 C2178.79 984 2174.56 961.63 2184.66 961.63 C2190.53 961.63 2192.65 961.63 2200.63 961.63 C2208.61 961.63 2208.61 961.63 2216.6 961.63 C2224.58 961.63 2224.58 961.63 2232.56 961.63 C2240.55 961.63 2240.55 961.63 2248.53 961.63 C2256.52 961.63 2256.52 961.63 2264.5 961.63 C2272.48 961.63 2272.48 961.63 2280.47 961.63 C2288.45 961.63 2288.45 961.63 2296.44 961.63 C2304.42 961.63 2304.42 961.63 2312.4 961.63 C2320.39 961.63 2320.39 961.63 2328.37 961.63 C2336.35 961.63 2336.35 961.63 2344.34 961.63 C2352.32 961.63 2352.32 961.63 2360.31 961.63 C2368.29 961.63 2368.29 961.63 2376.27 961.63 C2384.26 961.63 2384.26 961.63 2392.24 961.63 C2400.23 961.63 2400.23 961.63 2408.21 961.63 C2416.19 961.63 2416.19 961.63 2424.18 961.63 C2432.16 961.63 2432.16 961.63 2440.15 961.63 C2448.13 961.63 2448.13 961.63 2456.11 961.63 C2464.1 961.63 2468.64 961.63 2472.08 961.63 C2484.61 961.63 2475.52 905.71 2488.05 905.71 C2491.49 905.71 2504.02 905.71 2504.02 905.71 L2504.02 984 L2024.98 984z" fill="#e6e9ed"/><path d="M2024.98 984 C2024.98 984 2032.97 984 2040.95 984 C2048.94 984 2048.94 984 2056.92 984 C2064.9 984 2064.9 984 2072.89 984 C2080.87 984 2080.87 984 2088.85 984 C2096.84 984 2096.84 984 2104.82 984 C2112.81 984 2112.81 984 2120.79 984 C2128.77 984 2128.77 984 2136.76 984 C2144.74 984 2144.74 984 2152.73 984 C2160.71 984 2162.83 984 2168.69 984 C2178.79 984 2174.56 961.63 2184.66 961.63 C2190.53 961.63 2192.65 961.63 2200.63 961.63 C2208.61 961.63 2208.61 961.63 2216.6 961.63 C2224.58 961.63 2224.58 961.63 2232.56 961.63 C2240.55 961.63 2240.55 961.63 2248.53 961.63 C2256.52 961.63 2256.52 961.63 2264.5 961.63 C2272.48 961.63 2272.48 961.63 2280.47 961.63 C2288.45 961.63 2288.45 961.63 2296.44 961.63 C2304.42 961.63 2304.42 961.63 2312.4 961.63 C2320.39 961.63 2320.39 961.63 2328.37 961.63 C2336.35 961.63 2336.35 961.63 2344.34 961.63 C2352.32 961.63 2352.32 961.63 2360.31 961.63 C2368.29 961.63 2368.29 961.63 2376.27 961.63 C2384.26 961.63 2384.26 961.63 2392.24 961.63 C2400.23 961.63 2400.23 961.63 2408.21 961.63 C2416.19 961.63 2416.19 961.63 2424.18 961.63 C2432.16 961.63 2432.16 961.63 2440.15 961.63 C2448.13 961.63 2448.13 961.63 2456.11 961.63 C2464.1 961.63 2468.64 961.63 2472.08 961.63 C2484.61 961.63 2475.52 905.71 2488.05 905.71 C2491.49 905.71 2504.02 905.71 2504.02 905.71" fill="none" stroke="#cfcfcf" stroke-width="1"/><path d="M2024.98 984 C2024.98 984 2032.97 984 2040.95 984 C2048.94 984 2048.94 984 2056.92 984 C2064.9 984 2064.9 984 2072.89 984 C2080.87 984 2080.87 984 2088.85 984 C2096.84 984 2096.84 984 2104.82 984 C2112.81 984 2112.81 984 2120.79 984 C2128.77 984 2128.77 984 2136.76 984 C2144.74 984 2144.74 984 2152.73 984 C2160.71 984 2160.71 984 2168.69 984 C2176.68 984 2182.88 984 2184.66 984 C2198.84 984 2186.45 858.18 2200.63 858.18 C2202.41 858.18 2216.6 858.18 2216.6 858.18 L2216.60 984 L2024.98 984z" fill="#fbdb7d" fill-opacity="0.85"/><path d="M2024.98 984 C2024.98 984 2032.97 984 2040.95 984 C2048.94 984 2048.94 984 2056.92 984 C2064.9 984 2064.9 984 2072.89 984 C2080.87 984 2080.87 984 2088.85 984 C2096.84 984 2096.84 984 2104.82 984 C2112.81 984 2112.81 984 2120.79 984 C2128.77 984 2128.77 984 2136.76 984 C2144.74 984 2144.74 984 2152.73 984 C2160.71 984 2160.71 984 2168.69 984 C2176.68 984 2182.88 984 2184.66 984 C2198.84 984 2186.45 858.18 2200.63 858.18 C2202.41 858.18 2216.6 858.18 2216.6 858.18" fill="none" stroke="#fdd35a" stroke-width="2"/><line x1="2017" x2="2512" y1="984.5" y2="984.5" stroke="#6e7079" stroke-width="1"/><line x1="2017.5" x2="2017.5" y1="984" y2="989" stroke="#6e7079" stroke-width="1"/><line x1="2049.4" x2="2049.4" y1="984" y2="989" stroke="#6e7079" stroke-width="1"/><line x1="2081.4" x2="2081.4" y1="984" y2="989" stroke="#6e7079" stroke-width="1"/><line x1="2113.3" x2="2113.3" y1="984" y2="989" stroke="#6e7079" stroke-width="1"/><line x1="2145.2" x2="2145.2" y1="984" y2="989" stroke="#6e7079" stroke-width="1"/><line x1="2177.2" x2="2177.2" y1="984" y2="989" stroke="#6e7079" stroke-width="1"/><line x1="2209.1" x2="2209.1" y1="984" y2="989" stroke="#6e7079" stroke-width="1"/><line x1="2241.0" x2="2241.0" y1="984" y2="989" stroke="#6e7079" stroke-width="1"/><line x1="2273.0" x2="2273.0" y1="984" y2="989" stroke="#6e7079" stroke-width="1"/><line x1="2304.9" x2="2304.9" y1="984" y2="989" stroke="#6e7079" stroke-width="1"/><line x1="2336.9" x2="2336.9" y1="984" y2="989" stroke="#6e7079" stroke-width="1"/><line x1="2368.8" x2="2368.8" y1="984" y2="989" stroke="#6e7079" stroke-width="1"/><line x1="2400.7" x2="2400.7" y1="984" y2="989" stroke="#6e7079" stroke-width="1"/><line x1="2432.7" x2="2432.7" y1="984" y2="989" stroke="#6e7079" stroke-width="1"/><line x1="2464.6" x2="2464.6" y1="984" y2="989" stroke="#6e7079" stroke-width="1"/><line x1="2496.5" x2="2496.5" y1="984" y2="989" stroke="#6e7079" stroke-width="1"/><line x1="2512.5" x2="2512.5" y1="984" y2="989" stroke="#6e7079" stroke-width="1"/><text x="2025.0" y="1001" text-anchor="middle" class="ax">1</text><text x="2056.9" y="1001" text-anchor="middle" class="ax">3</text><text x="2088.9" y="1001" text-anchor="middle" class="ax">5</text><text x="2120.8" y="1001" text-anchor="middle" class="ax">7</text><text x="2152.7" y="1001" text-anchor="middle" class="ax">9</text><text x="2184.7" y="1001" text-anchor="middle" class="ax">11</text><text x="2216.6" y="1001" text-anchor="middle" class="ax">13</text><text x="2248.5" y="1001" text-anchor="middle" class="ax">15</text><text x="2280.5" y="1001" text-anchor="middle" class="ax">17</text><text x="2312.4" y="1001" text-anchor="middle" class="ax">19</text><text x="2344.3" y="1001" text-anchor="middle" class="ax">21</text><text x="2376.3" y="1001" text-anchor="middle" class="ax">23</text><text x="2408.2" y="1001" text-anchor="middle" class="ax">25</text><text x="2440.1" y="1001" text-anchor="middle" class="ax">27</text><text x="2472.1" y="1001" text-anchor="middle" class="ax">29</text><text x="2504.0" y="1001" text-anchor="middle" class="ax">31</text><path d="M2194.8 1022.5h25" stroke="#cfcfcf" stroke-width="2"/><circle cx="2207.4" cy="1022.5" r="4.5" fill="#fff" stroke="#3aa0da" stroke-width="2"/><text x="2225.7" y="1026.8" style="font-size:12px;fill:#555">전월</text><path d="M2257.9 1022.5h25" stroke="#fdd35a" stroke-width="2"/><circle cx="2270.4" cy="1022.5" r="4.5" fill="#fff" stroke="#fdd35a" stroke-width="2"/><text x="2287.6" y="1026.8" style="font-size:12px;fill:#555">당월</text></svg>
<!--/CARDS-->

<!-- FOOTER -->
<div id="foot">
  <div class="abs" style="left:221px;top:0;width:1px;height:28px;background:#dde2ea"></div>
  <div class="abs" style="left:5px;top:6px;font-size:12px;color:#111;line-height:15px">빠른메뉴</div>
  <svg style="left:209px;top:11px" width="9" height="6" viewBox="0 0 9 6"><path d="M1 1l3.5 3.5L8 1" fill="none" stroke="#111" stroke-width="1.6"/></svg>
  <div class="abs" style="left:228px;top:8px;font-size:11.5px;color:#333;white-space:nowrap;line-height:14px;letter-spacing:-0.15px">Wed Aug 13 13:20:39 KST 2025 logged in &nbsp;(00:00:00)</div>
  <div class="abs" style="left:2498px;top:9px;width:56px;height:15px;border-radius:8px;background:#178a55;color:#fff;font-size:9px;font-weight:bold;text-align:center;line-height:15px;letter-spacing:-0.4px">DEV MODE</div>
</div>

</body></html>
